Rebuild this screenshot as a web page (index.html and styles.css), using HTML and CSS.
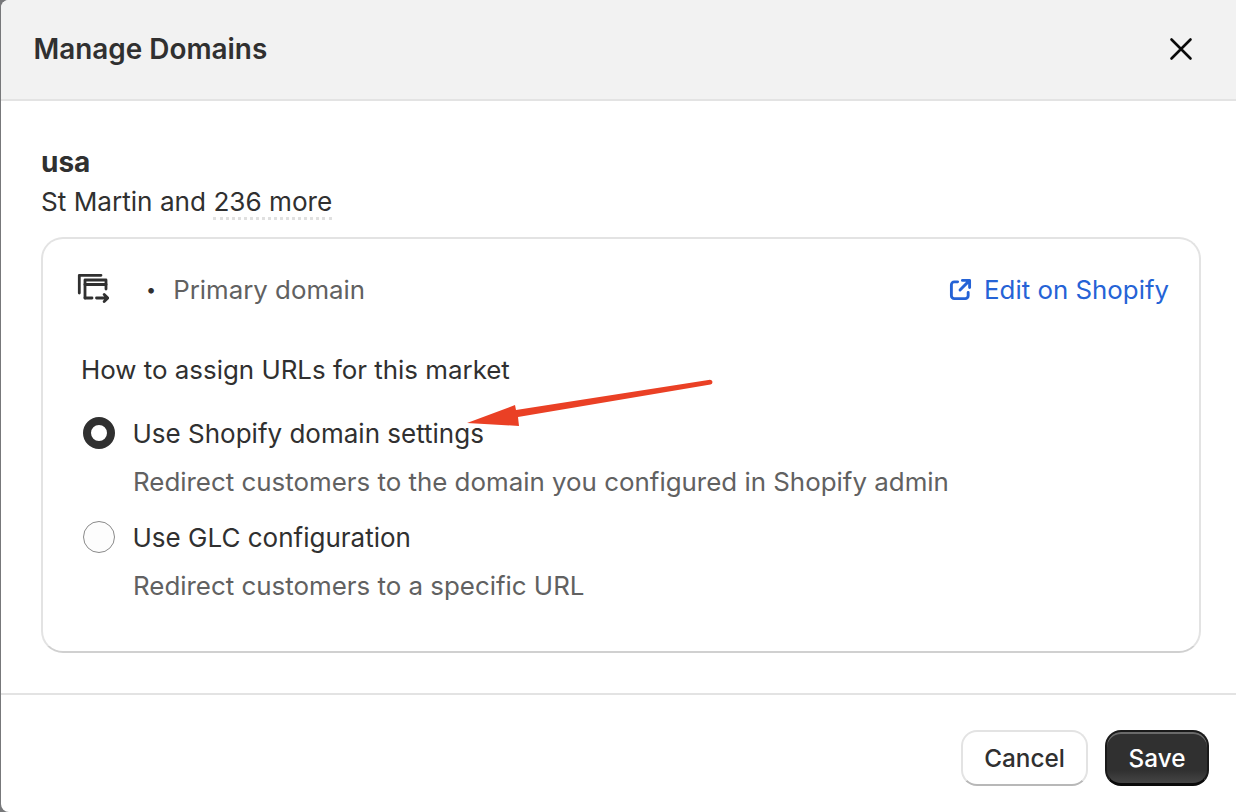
FILE: index.html
```html
<!DOCTYPE html>
<html lang="en">
<head>
<meta charset="utf-8">
<title>Manage Domains</title>
<link rel="stylesheet" href="styles.css">
</head>
<body>
<div class="modal">
  <header class="modal-header">
    <h1 class="modal-title">Manage Domains</h1>
    <svg class="close-icon" viewBox="0 0 24 24" width="24" height="24"><path d="M2.500 2.500 L21.500 21.500 M21.500 2.500 L2.500 21.500" fill="none" stroke="#0a0a0a" stroke-width="2.600" stroke-linecap="round"/></svg>
  </header>
  <main class="modal-body">
    <div class="market-name">usa</div>
    <div class="market-sub">St Martin and <span class="dotted">236 more</span></div>
    <section class="card">
      <div class="card-top">
        <svg class="domain-icon" viewBox="0 0 32 32" width="32" height="32"><g fill="none" stroke="#303030" stroke-width="2.800" stroke-linecap="round" stroke-linejoin="round"><path d="M2.300 20 V2.300 H24"/><path d="M8 25 V7 H29 V16"/><path d="M8 11.500 H29"/><path d="M8 25 H15"/><path d="M19.500 25 H30.500 M27.200 21.500 L30.800 25 L27.200 28.500"/></g></svg>
        <span class="bullet">•</span>
        <span class="primary-label">Primary domain</span>
        <a class="edit-link" href="#">
          <svg viewBox="0 0 24 24" width="23" height="23"><g fill="none" stroke="#2563d6" stroke-width="3" stroke-linecap="round" stroke-linejoin="round"><path d="M9 4 H5.500 A3 3 0 0 0 2.500 7 V18.500 A3 3 0 0 0 5.500 21.500 H17 A3 3 0 0 0 20 18.500 V15"/><path d="M14 2.500 H21.500 V10 M21 3 L11.500 12.500"/></g></svg>
          <span>Edit on Shopify</span>
        </a>
      </div>
      <div class="assign-title">How to assign URLs for this market</div>
      <div class="option">
        <span class="radio radio-on"></span>
        <span class="option-label">Use Shopify domain settings</span>
      </div>
      <div class="option-help">Redirect customers to the domain you configured in Shopify admin</div>
      <div class="option option-next">
        <span class="radio"></span>
        <span class="option-label">Use GLC configuration</span>
      </div>
      <div class="option-help">Redirect customers to a specific URL</div>
    </section>
  </main>
  <footer class="modal-footer">
    <button class="btn btn-cancel">Cancel</button>
    <button class="btn btn-save">Save</button>
  </footer>
  <svg class="arrow" viewBox="0 0 1236 812" width="1236" height="812"><path d="M467 423 L515 405 L516 410 L710 379.700 Q712.500 380 712.500 382 Q712.500 384 710.500 384.500 L518 417 L519 426 Z" fill="#ea4025"/></svg>
</div>
</body>
</html>
```
FILE: styles.css
```css
* { box-sizing: border-box; }
html, body { margin: 0; height: 100%; }
body {
  width: 1236px;
  height: 812px;
  overflow: hidden;
  background: #77787a;
  font-family: Inter, "Liberation Sans", sans-serif;
  font-size: 25.9px;
  color: #303030;
  padding-left: 1px;
}
.modal {
  position: relative;
  height: 812px;
  background: #fff;
  border-radius: 8px 0 0 8px;
  display: flex;
  flex-direction: column;
  overflow: hidden;
}
.modal-header {
  height: 101px;
  flex: none;
  background: #f2f2f2;
  border-bottom: 2px solid #e3e3e3;
  display: flex;
  align-items: center;
  justify-content: space-between;
  padding: 0 43px 1px 32.5px;
}
.modal-title { margin: 0; font-size: 27.9px; font-weight: 600; }
.close-icon { display: block; }
.modal-body { flex: 1; padding: 43px 35px 0 40px; display: flex; flex-direction: column; }
.market-name { font-size: 28px; font-weight: 700; line-height: 36px; }
.market-sub { font-size: 26.15px; line-height: 40px; margin-top: 2px; }
.dotted { border-bottom: 3px dotted #e0e0e0; }
.card {
  margin-top: 15px;
  height: 416px;
  border: 2px solid #e3e3e3;
  border-bottom-color: #d0d0d0;
  border-radius: 22px;
  padding: 30px 30px 0 38px;
}
.card-top { display: flex; align-items: center; height: 40px; }
.domain-icon { margin-left: -4px; flex: none; }
.bullet { margin-left: 37px; font-size: 18px; color: #303030; }
.primary-label { margin-left: 17px; font-size: 25.85px; color: #616161; }
.edit-link {
  margin-left: auto;
  display: flex;
  align-items: center;
  gap: 12px;
  font-size: 25.85px;
  color: #2563d6;
  text-decoration: none;
}
.assign-title { line-height: 40px; margin-top: 41px; }
.option { display: flex; align-items: center; gap: 18px; height: 40px; margin-top: 23px; }
.option-next { margin-top: 15px; }
.radio {
  width: 32px;
  height: 32px;
  flex: none;
  margin-left: 1.5px;
  border: 1.5px solid #8a8a8a;
  border-radius: 50%;
  background: #fdfdfd;
}
.radio-on { border: 8px solid #303030; background: #fff; }
.option-label { font-size: 26px; }
.option-help { line-height: 40px; color: #616161; margin: 9px 0 0 52px; }
.modal-footer {
  height: 119px;
  flex: none;
  border-top: 2px solid #e3e3e3;
  display: flex;
  justify-content: flex-end;
  align-items: flex-start;
  gap: 17px;
  padding: 35px 27px 0 0;
}
.btn {
  height: 56px;
  border-radius: 16px;
  font: 500 24.3px Inter, "Liberation Sans", sans-serif;
  padding: 0;
}
.btn-cancel {
  width: 127px;
  background: #fff;
  color: #303030;
  border: 2px solid #e3e3e3;
  border-bottom-color: #b8b8b8;
}
.btn-save {
  width: 104px;
  background: linear-gradient(#303030 75%, #454545);
  color: #fff;
  border: 2px solid #1a1a1a;
  border-bottom: 3px solid #0a0a0a;
  box-shadow: inset 0 2px 0 #6a6a6a;
}
.arrow { position: absolute; left: -1px; top: 0; pointer-events: none; }
```
